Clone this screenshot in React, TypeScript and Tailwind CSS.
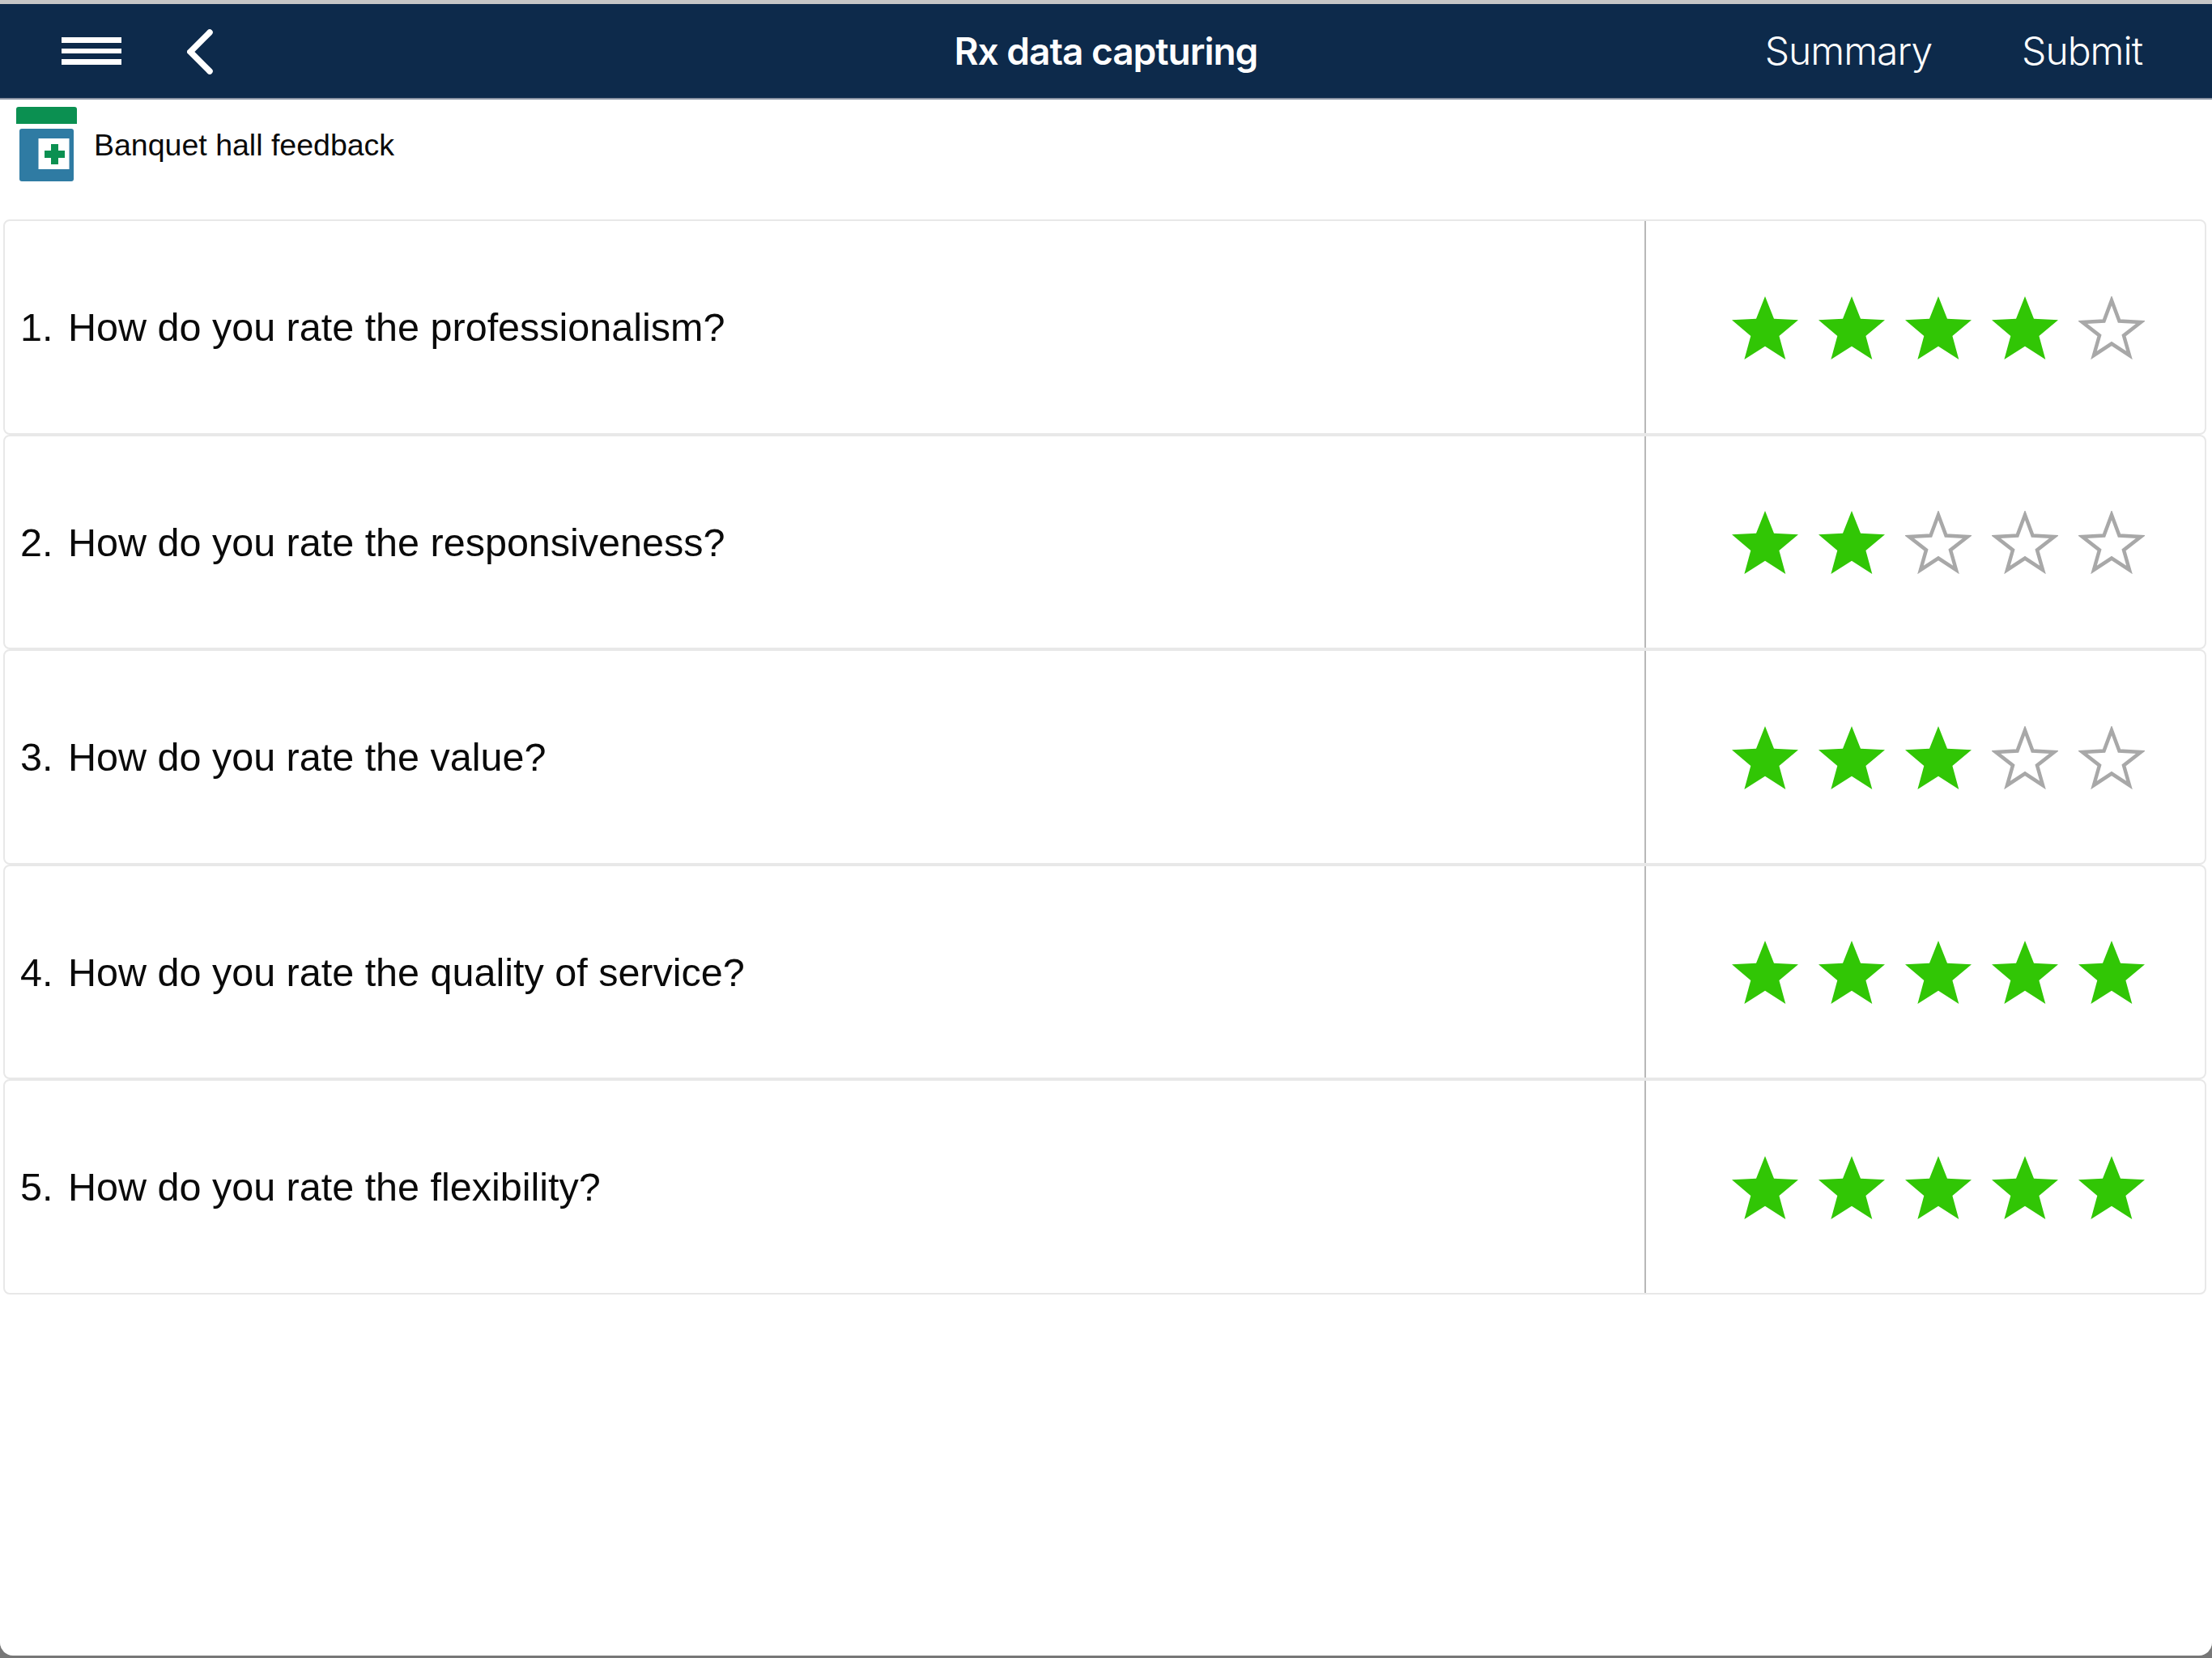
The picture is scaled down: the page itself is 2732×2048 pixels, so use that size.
import React from 'react';

const questions = [
  { text: 'How do you rate the professionalism?', rating: 4 },
  { text: 'How do you rate the responsiveness?', rating: 2 },
  { text: 'How do you rate the value?', rating: 3 },
  { text: 'How do you rate the quality of service?', rating: 5 },
  { text: 'How do you rate the flexibility?', rating: 5 },
];

function Star({ filled }: { filled: boolean }) {
  return (
    <svg viewBox="0 0 82 78" className="w-[82px] h-[78px] mt-[2px]">
      {filled ? (
        <polygon
          fill="#31c605"
          points="41,0 52,27.7 82,29.3 58.4,49 66.3,78 41,61.7 15.4,78 23.3,49 0,29.3 30,27.7"
        />
      ) : (
        <polygon
          fill="none"
          stroke="#a8a8a8"
          strokeWidth="4.5"
          points="41,5 50.5,30.5 77,32 56,48.4 63,73 41,58.5 19,73 26,48.4 5,32 31.5,30.5"
        />
      )}
    </svg>
  );
}

function Rx() {
  return (
    <svg viewBox="0 0 75 92" className="w-[75px] h-[92px]">
      <path d="M0 3a3 3 0 0 1 3-3h69a3 3 0 0 1 3 3v18H0z" fill="#0b9051" />
      <rect x="4" y="27" width="67" height="65" rx="3" fill="#2f7ba3" />
      <rect x="27.5" y="39" width="38" height="38" fill="#ffffff" />
      <path d="M43 46h9v8h8v9h-8v8h-9v-8h-8v-9h8z" fill="#0b9051" />
    </svg>
  );
}

export default function App() {
  return (
    <div className="w-[2732px] h-[2048px] bg-[#777777] overflow-hidden font-['Liberation_Sans',Arial,sans-serif]">
      <div className="h-[2045px] bg-white rounded-b-[16px] overflow-hidden">
        <div className="h-[5px] bg-[#c6c6c6]" />

        {/* Header */}
        <header className="h-[118px] bg-[#0d2a4b] border-b-2 border-[#8a93a3] grid grid-cols-[1fr_auto_1fr] items-center text-white font-['Inter',sans-serif]">
          <div className="flex items-center pl-[76px] gap-[81px]">
            <div className="flex flex-col gap-[7px] w-[74px]">
              <div className="h-[6.5px] bg-white" />
              <div className="h-[6.5px] bg-white" />
              <div className="h-[6.5px] bg-white" />
            </div>
            <svg viewBox="0 0 32 56" className="w-[32px] h-[56px] mt-[2px]">
              <polyline
                points="28,4 4,28 28,52"
                fill="none"
                stroke="#ffffff"
                strokeWidth="7.5"
                strokeLinecap="round"
              />
            </svg>
          </div>
          <div className="text-[46px] font-semibold tracking-[-1px]">Rx data capturing</div>
          <div className="flex justify-end items-center pr-[86px] gap-[111px] text-[48px] font-light tracking-[-1px]">
            <span>Summary</span>
            <span>Submit</span>
          </div>
        </header>

        {/* Form title */}
        <div className="h-[148px] pl-[20px] pt-[9px] flex items-start gap-[21px]">
          <Rx />
          <div className="h-[94px] flex items-center text-[37.5px] text-[#0a0a0a]">Banquet hall feedback</div>
        </div>

        {/* Questions */}
        <div className="ml-[4px] mr-[7px]">
          {questions.map((q, i) => (
            <div
              key={q.text}
              className="h-[265.5px] flex border-2 border-[#e8e8e8] rounded-[8px] text-[48.5px] text-[#0a0a0a]"
            >
              <div className="w-[2025px] flex items-center pl-[19px] pt-[2px]">
                <span className="w-[59px]">{i + 1}.</span>
                <span>{q.text}</span>
              </div>
              <div className="flex-1 flex items-center justify-end gap-[25px] pr-[74px] border-l-2 border-[#b8b8b8]">
                {[1, 2, 3, 4, 5].map((n) => (
                  <Star key={n} filled={n <= q.rating} />
                ))}
              </div>
            </div>
          ))}
        </div>
      </div>
    </div>
  );
}
